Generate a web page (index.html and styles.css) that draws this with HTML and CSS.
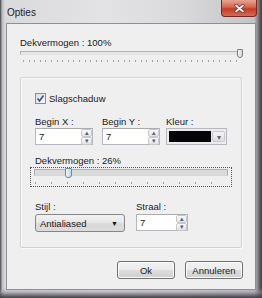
FILE: index.html
```html
<!DOCTYPE html>
<html>
<head>
    <title>Opties</title>
    <link rel="stylesheet" href="styles.css">
</head>
<body>
    <div class="window">
        <div class="titlebar">
            <span class="title">Opties</span>
            <button type="button" class="close">
                <svg width="11" height="9" viewBox="0 0 11 9">
                    <path d="M2 1.5 L9 7.5 M9 1.5 L2 7.5" stroke="#6b2a20" stroke-width="3.2" stroke-linecap="round"/>
                    <path d="M2 1.5 L9 7.5 M9 1.5 L2 7.5" stroke="#ffffff" stroke-width="1.8" stroke-linecap="round"/>
                </svg>
            </button>
        </div>
        <div class="client">
            <div class="label">Dekvermogen : 100%</div>
            <div class="slider wide">
                <div class="track"></div>
                <div class="thumb" style="left: 217px;"></div>
                <div class="ticks dense"></div>
            </div>

            <div class="group">
                <label class="check">
                    <span class="box">
                        <svg width="9" height="9" viewBox="0 0 9 9">
                            <path d="M1.5 4.5 L3.5 7 L7.5 1.5" fill="none" stroke="#3c4f86" stroke-width="1.6"/>
                        </svg>
                    </span>
                    Slagschaduw
                </label>

                <div class="row">
                    <div class="field col-x">
                        <div class="label">Begin X :</div>
                        <div class="spin">
                            <span class="value">7</span>
                            <span class="arrows"><i>&#x25B4;</i><i>&#x25BE;</i></span>
                        </div>
                    </div>
                    <div class="field col-y">
                        <div class="label">Begin Y :</div>
                        <div class="spin">
                            <span class="value">7</span>
                            <span class="arrows"><i>&#x25B4;</i><i>&#x25BE;</i></span>
                        </div>
                    </div>
                    <div class="field">
                        <div class="label">Kleur :</div>
                        <div class="colorpick">
                            <span class="swatch"></span>
                            <span class="drop">&#x25BE;</span>
                        </div>
                    </div>
                </div>

                <div class="label sub">Dekvermogen : 26%</div>
                <div class="slider inner">
                    <div class="track filled"></div>
                    <div class="thumb" style="left: 34px;"></div>
                    <div class="ticks sparse"></div>
                </div>

                <div class="row lower">
                    <div class="field col-style">
                        <div class="label">Stijl :</div>
                        <div class="combo">
                            <span>Antialiased</span>
                            <span class="caret">&#x25BC;</span>
                        </div>
                    </div>
                    <div class="field">
                        <div class="label">Straal :</div>
                        <div class="spin small">
                            <span class="value">7</span>
                            <span class="arrows"><i>&#x25B4;</i><i>&#x25BE;</i></span>
                        </div>
                    </div>
                </div>
            </div>

            <div class="buttons">
                <button type="button" class="btn">Ok</button>
                <button type="button" class="btn">Annuleren</button>
            </div>
        </div>
    </div>
</body>
</html>
```

FILE: styles.css
```css
body {
    margin: 0;
    font-family: "Liberation Sans", Arial, sans-serif;
    font-size: 9.5px;
    color: #1a1a1a;
    background: #8a8a8c;
}
.window {
    width: 262px;
    height: 298px;
    box-sizing: border-box;
    padding: 0 6px 8px 6px;
    display: flex;
    flex-direction: column;
    background:
        linear-gradient(180deg, rgba(255,255,255,0) 0, rgba(255,255,255,0) 288px, rgba(150,140,160,0.5) 292px, #3d3d42 298px),
        linear-gradient(90deg, #3e3e42 0px, #b9b9bd 2px, #dadadd 5px, #e3e3e5 40%, #d9d9dc 70%, #c4c4c8 97%, #3a3a3e 100%);
}
.titlebar {
    height: 23px;
    display: flex;
    align-items: flex-start;
    justify-content: space-between;
}
.title {
    margin: 7px 0 0 1px;
    color: #222;
    font-size: 10px;
}
.close {
    width: 36px;
    height: 17px;
    margin-right: -1px;
    border: 1px solid #6f2b22;
    border-top: none;
    border-radius: 0 0 4px 4px;
    background: linear-gradient(#e8a494, #d8634d 45%, #c23c27 55%, #d96a52);
    padding: 0;
    display: flex;
    align-items: center;
    justify-content: center;
}
.client {
    flex: 1;
    background: #efefef;
    border: 1px solid #8e8f94;
    padding: 13px 13px 0 13px;
    display: flex;
    flex-direction: column;
}
.label {
    height: 12px;
    line-height: 12px;
    white-space: nowrap;
}
.slider {
    position: relative;
}
.slider.wide {
    height: 28px;
}
.track {
    position: absolute;
    left: 0;
    right: 0;
    top: 2px;
    height: 2px;
    border: 1px solid #b4b4b4;
    border-bottom-color: #e4e4e4;
    background: #e6e6e6;
}
.thumb {
    position: absolute;
    top: 0;
    width: 4px;
    height: 7px;
    border: 1px solid #7d7d7d;
    border-radius: 1px 1px 3px 3px;
    background: linear-gradient(90deg, #f6f6f6, #d4d4d4);
}
.ticks {
    position: absolute;
    left: 3px;
    right: 3px;
    top: 11px;
    height: 2px;
}
.ticks.dense {
    background: repeating-linear-gradient(90deg, #a3a3a3 0 1px, transparent 1px 5.6px);
}
.group {
    height: 171px;
    box-sizing: border-box;
    border: 1px solid #d2d2d2;
    border-radius: 2px;
    box-shadow: inset 1px 1px 0 #fafafa, 1px 1px 0 #fafafa;
    padding: 15px 0 0 14px;
}
.check {
    display: flex;
    align-items: center;
    gap: 3px;
    height: 11px;
}
.box {
    width: 9px;
    height: 9px;
    border: 1px solid #8e8f8f;
    background: linear-gradient(135deg, #d8dfe8, #f8f8f8);
    display: flex;
}
.row {
    display: flex;
    margin-top: 12px;
}
.field {
    display: flex;
    flex-direction: column;
}
.col-x {
    width: 67px;
}
.col-y {
    width: 64px;
}
.spin {
    width: 58px;
    height: 17px;
    box-sizing: border-box;
    border: 1px solid #b5b8bf;
    border-top-color: #a9abb1;
    background: #fff;
    display: flex;
    justify-content: space-between;
}
.spin.small {
    width: 52px;
    margin-top: 1px;
}
.value {
    padding-left: 3px;
    line-height: 15px;
}
.arrows {
    width: 11px;
    display: flex;
    flex-direction: column;
}
.arrows i {
    flex: 1;
    font-style: normal;
    font-size: 7px;
    line-height: 6px;
    text-align: center;
    color: #4d6185;
    border: 1px solid #c8c8c8;
    border-radius: 2px;
    background: linear-gradient(#fbfbfb, #e2e2e2);
}
.colorpick {
    width: 61px;
    height: 17px;
    box-sizing: border-box;
    border: 1px solid #b5b8bf;
    background: #ececec;
    display: flex;
    padding: 2px 1px 2px 2px;
    gap: 1px;
}
.swatch {
    flex: 1;
    background: #050505;
}
.drop {
    width: 11px;
    font-size: 8px;
    line-height: 11px;
    text-align: center;
    color: #666;
    border: 1px solid #cacaca;
    border-radius: 2px;
    background: linear-gradient(#f4f4f4, #dedede);
}
.label.sub {
    margin-top: 10px;
}
.slider.inner {
    margin-left: -5px;
    width: 202px;
    height: 20px;
    box-sizing: border-box;
    border: 1px dotted #555;
}
.slider.inner .track.filled {
    left: 3px;
    right: 3px;
    top: 1px;
    height: 5px;
    background: #dadada;
    border-color: #b0b0b0;
    border-bottom-color: #d6d6d6;
}
.slider.inner .thumb {
    top: 0;
    width: 5px;
    height: 8px;
    border-color: #6f8aa8;
    background: linear-gradient(90deg, #eef6fb, #bcd6e8);
}
.ticks.sparse {
    top: 14px;
    left: 4px;
    right: 4px;
    height: 2px;
    background: repeating-linear-gradient(90deg, #9a9a9a 0 1px, transparent 1px 16px);
}
.row.lower {
    margin-top: 14px;
}
.col-style {
    width: 101px;
}
.combo {
    width: 90px;
    height: 18px;
    margin-top: 1px;
    box-sizing: border-box;
    border: 1px solid #868686;
    border-radius: 3px;
    background: linear-gradient(#f3f3f3, #e8e8e8 45%, #d9d9d9 55%, #dcdcdc);
    display: flex;
    justify-content: space-between;
    align-items: center;
    padding: 0 6px 0 4px;
}
.caret {
    font-size: 7px;
    color: #111;
}
.buttons {
    display: flex;
    justify-content: flex-end;
    gap: 10px;
    margin-top: 13px;
    margin-right: -1px;
}
.btn {
    width: 58px;
    height: 18px;
    padding: 0;
    font-family: inherit;
    font-size: 9.5px;
    color: #1a1a1a;
    border: 1px solid #707070;
    border-radius: 3px;
    background: linear-gradient(#f2f2f2, #ebebeb 50%, #dddddd 51%, #cfcfcf);
    box-shadow: inset 0 0 0 1px #fbfbfb;
}
```
